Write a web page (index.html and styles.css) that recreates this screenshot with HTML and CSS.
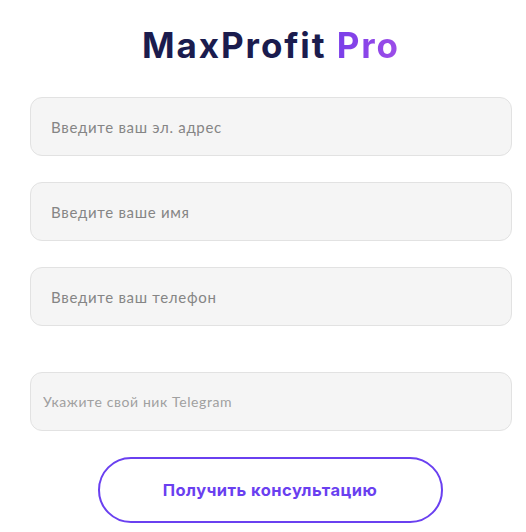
FILE: index.html
```html
<!DOCTYPE html>
<html lang="ru">
<head>
<meta charset="utf-8">
<title>MaxProfit Pro</title>
<link rel="stylesheet" href="styles.css">
</head>
<body>
<main class="page">
  <h1 class="title">MaxProfit <span class="accent">Pro</span></h1>
  <form class="form">
    <input class="field" type="email" placeholder="Введите ваш эл. адрес">
    <input class="field" type="text" placeholder="Введите ваше имя">
    <input class="field" type="tel" placeholder="Введите ваш телефон">
    <input class="field field-tg" type="text" placeholder="Укажите свой ник Telegram">
    <button class="submit" type="button">Получить консультацию</button>
  </form>
</main>
</body>
</html>
```

FILE: styles.css
```css
html, body {
  margin: 0;
  padding: 0;
  background: #ffffff;
}
.page {
  width: 482px;
  margin-left: 30px;
  padding-top: 21px;
  display: flex;
  flex-direction: column;
  align-items: stretch;
}
.title {
  margin: 0;
  text-align: center;
  font-family: Inter, "Noto Sans", sans-serif;
  font-weight: 700;
  font-size: 35px;
  line-height: 48px;
  color: #1b1c4e;
  letter-spacing: 1.9px;
}
.accent {
  background: linear-gradient(90deg, #7a3ee9, #9d4de8);
  -webkit-background-clip: text;
  background-clip: text;
  color: transparent;
}
.form {
  margin-top: 28px;
  display: flex;
  flex-direction: column;
  gap: 26px;
}
.field {
  box-sizing: border-box;
  height: 59px;
  width: 100%;
  border: 1px solid #e2e2e2;
  border-radius: 12px;
  background: #f5f5f5;
  padding: 0 20px;
  font-family: Lato, "Open Sans", sans-serif;
  font-size: 15px;
  letter-spacing: 0.7px;
  color: #333;
  outline: none;
}
.field::placeholder {
  color: #858585;
}
.field-tg {
  margin-top: 20px;
  padding: 0 12px;
  font-size: 14px;
  letter-spacing: 0.6px;
}
.field-tg::placeholder {
  color: #a0a0a0;
}
.submit {
  align-self: center;
  box-sizing: border-box;
  width: 345px;
  height: 66px;
  margin-right: 2px;
  border: 2px solid #6a40f0;
  border-radius: 34px;
  background: #ffffff;
  color: #6a3ff0;
  font-family: Inter, "Noto Sans", sans-serif;
  font-weight: 700;
  font-size: 16.5px;
  letter-spacing: 0.45px;
  cursor: pointer;
}
```
